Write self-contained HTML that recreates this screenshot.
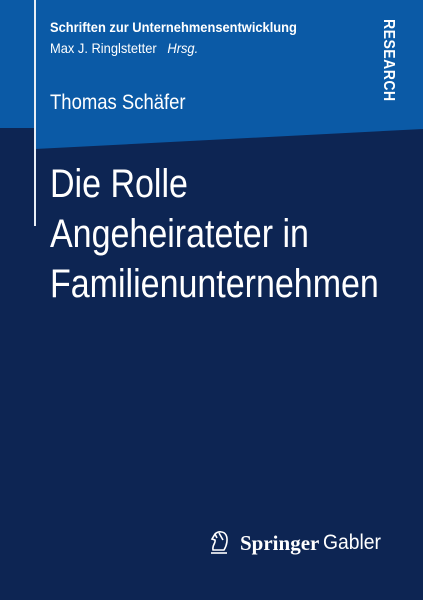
<!DOCTYPE html><html><head><style>
body{margin:0;width:423px;height:600px;overflow:hidden;background:#0d2553;font-family:"Liberation Sans Narrow","Liberation Sans",sans-serif;color:#fff;position:relative}
.blue{position:absolute;left:0;top:0;width:423px;height:150px;background:#0b5aa6;clip-path:polygon(0 0,423px 0,423px 129px,35px 149px,35px 128px,0 128px)}
.vl{position:absolute;left:34px;top:0;width:2px;height:226px;background:#e8eef6}
.t{position:absolute;left:50px;white-space:nowrap;transform-origin:0 0}
</style></head><body>
<div class="blue"></div><div class="vl"></div>
<div class="t" style="top:19px;font-size:14px;font-weight:bold;transform:scaleX(.92)">Schriften zur Unternehmensentwicklung</div>
<div class="t" style="top:40px;font-size:14px;transform:scaleX(.92)">Max J. Ringlstetter &nbsp;&nbsp;<i>Hrsg.</i></div>
<div class="t" style="top:91px;font-size:21px;transform:scaleX(.88)">Thomas Schäfer</div>
<div style="position:absolute;left:379px;top:19px;font-size:16px;font-weight:bold;writing-mode:vertical-rl;transform:scaleY(.88);transform-origin:0 0;letter-spacing:.5px">RESEARCH</div>
<div class="t" style="top:159px;font-size:40px;line-height:50px;transform:scaleX(.85)">Die Rolle<br>Angeheirateter in<br>Familienunternehmen</div>
<svg style="position:absolute;left:209px;top:530px" width="22" height="26" viewBox="0 0 22 26" fill="none" stroke="#fff" stroke-width="1.6"><path d="M4 20 C3 15 7 13 6 10 L3 9 L6 4 C9 1 15 1 17 5 C19 9 18 15 15 20 Z"/><path d="M6 4 L8 8 M10 3 L14 10"/><path d="M2 23 H18"/></svg>
<div style="position:absolute;left:240px;top:531px;font-size:21px;font-family:'Liberation Serif',serif;font-weight:bold">Springer</div>
<div style="position:absolute;left:323px;top:531px;font-size:21px;transform:scaleX(.92);transform-origin:0 0">Gabler</div>
</body></html>
